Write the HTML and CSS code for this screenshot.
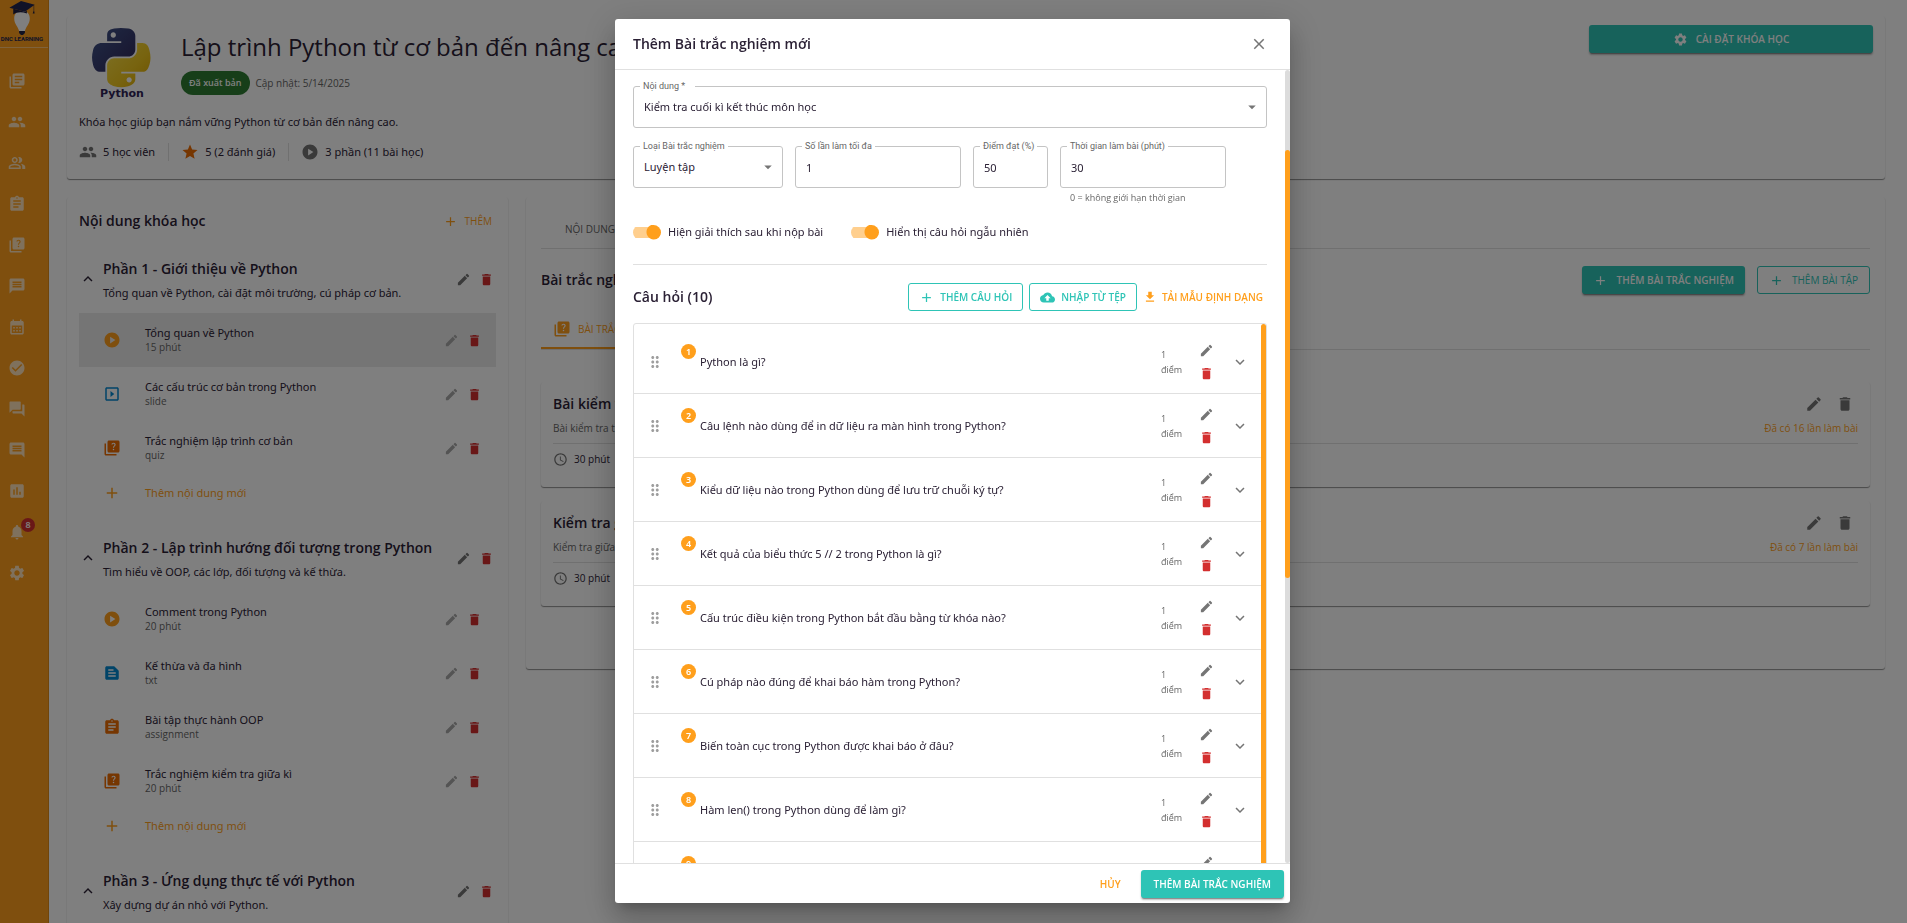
FILE: index.html
```html
<!DOCTYPE html>
<html lang="vi">
<head>
<meta charset="utf-8">
<title>DNC Learning</title>
<link rel="stylesheet" href="styles.css">
</head>
<body>
<svg class="sprite" aria-hidden="true">
<symbol id="books" viewBox="0 0 24 24"><path d="M4 6H2v14c0 1.1.9 2 2 2h14v-2H4zm16-4H8c-1.1 0-2 .9-2 2v12c0 1.1.9 2 2 2h12c1.1 0 2-.9 2-2V4c0-1.1-.9-2-2-2m-1 9H9V9h10zm-4 4H9v-2h6zm4-8H9V5h10z"/></symbol>
<symbol id="people" viewBox="0 0 24 24"><path d="M16 11c1.66 0 2.99-1.34 2.99-3S17.66 5 16 5s-3 1.34-3 3 1.34 3 3 3m-8 0c1.66 0 2.99-1.34 2.99-3S9.66 5 8 5 5 6.34 5 8s1.34 3 3 3m0 2c-2.33 0-7 1.17-7 3.5V19h14v-2.5c0-2.33-4.67-3.5-7-3.5m8 0c-.29 0-.62.02-.97.05 1.16.84 1.97 1.97 1.97 3.45V19h6v-2.5c0-2.33-4.67-3.5-7-3.5"/></symbol>
<symbol id="group" viewBox="0 0 24 24"><path d="M16.67 13.13C18.04 14.06 19 15.32 19 17v3h4v-3c0-2.18-3.57-3.47-6.33-3.87M15 12c2.21 0 4-1.79 4-4s-1.79-4-4-4c-.47 0-.91.1-1.33.24C14.5 5.27 15 6.58 15 8s-.5 2.73-1.33 3.76c.42.14.86.24 1.33.24m-6 0c2.21 0 4-1.79 4-4s-1.79-4-4-4-4 1.79-4 4 1.79 4 4 4m0-6c1.1 0 2 .9 2 2s-.9 2-2 2-2-.9-2-2 .9-2 2-2m0 7c-2.67 0-8 1.34-8 4v3h16v-3c0-2.66-5.33-4-8-4m6 5H3v-.99C3.2 16.29 6.3 15 9 15s5.8 1.29 6 2z"/></symbol>
<symbol id="assignment" viewBox="0 0 24 24"><path d="M19 3h-4.18C14.4 1.84 13.3 1 12 1s-2.4.84-2.82 2H5c-1.1 0-2 .9-2 2v14c0 1.1.9 2 2 2h14c1.1 0 2-.9 2-2V5c0-1.1-.9-2-2-2m-7 0c.55 0 1 .45 1 1s-.45 1-1 1-1-.45-1-1 .45-1 1-1m2 14H7v-2h7zm3-4H7v-2h10zm0-4H7V7h10z"/></symbol>
<symbol id="quiz" viewBox="0 0 24 24"><path d="M4 6H2v14c0 1.1.9 2 2 2h14v-2H4zm16-4H8c-1.1 0-2 .9-2 2v12c0 1.1.9 2 2 2h12c1.1 0 2-.9 2-2V4c0-1.1-.9-2-2-2m-5.99 13c-.59 0-1.05-.47-1.05-1.05 0-.59.47-1.04 1.05-1.04.59 0 1.04.45 1.04 1.04-.01.58-.45 1.05-1.04 1.05m2.5-6.17c-.63.93-1.23 1.21-1.56 1.81-.13.24-.18.4-.18 1.18h-1.52c0-.41-.06-1.08.26-1.65.41-.73 1.18-1.16 1.63-1.8.48-.68.21-1.94-1.14-1.94-.88 0-1.32.67-1.5 1.23l-1.37-.57C11.51 5.96 12.52 5 13.99 5c1.23 0 2.08.56 2.51 1.26.37.61.58 1.73.01 2.57"/></symbol>
<symbol id="message" viewBox="0 0 24 24"><path d="M20 2H4c-1.1 0-1.99.9-1.99 2L2 22l4-4h14c1.1 0 2-.9 2-2V4c0-1.1-.9-2-2-2m-2 12H6v-2h12zm0-3H6V9h12zm0-3H6V6h12z"/></symbol>
<symbol id="calendar" viewBox="0 0 24 24"><path d="M19 4h-1V2h-2v2H8V2H6v2H5c-1.11 0-1.99.9-1.99 2L3 20c0 1.1.89 2 2 2h14c1.1 0 2-.9 2-2V6c0-1.1-.9-2-2-2m0 16H5V10h14zM9 14H7v-2h2zm4 0h-2v-2h2zm4 0h-2v-2h2zm-8 4H7v-2h2zm4 0h-2v-2h2zm4 0h-2v-2h2z"/></symbol>
<symbol id="check" viewBox="0 0 24 24"><path d="M12 2C6.48 2 2 6.48 2 12s4.48 10 10 10 10-4.48 10-10S17.52 2 12 2m-2 15-5-5 1.41-1.41L10 14.17l7.59-7.59L19 8z"/></symbol>
<symbol id="forum" viewBox="0 0 24 24"><path d="M21 6h-2v9H6v2c0 .55.45 1 1 1h11l4 4V7c0-.55-.45-1-1-1m-4 6V3c0-.55-.45-1-1-1H3c-.55 0-1 .45-1 1v14l4-4h10c.55 0 1-.45 1-1"/></symbol>
<symbol id="comment" viewBox="0 0 24 24"><path d="M21.99 4c0-1.1-.89-2-1.99-2H4c-1.1 0-2 .9-2 2v12c0 1.1.9 2 2 2h14l4 4zM18 14H6v-2h12zm0-3H6V9h12zm0-3H6V6h12z"/></symbol>
<symbol id="chart" viewBox="0 0 24 24"><path d="M19 3H5c-1.1 0-2 .9-2 2v14c0 1.1.9 2 2 2h14c1.1 0 2-.9 2-2V5c0-1.1-.9-2-2-2M9 17H7v-7h2zm4 0h-2V7h2zm4 0h-2v-4h2z"/></symbol>
<symbol id="bell" viewBox="0 0 24 24"><path d="M12 22c1.1 0 2-.9 2-2h-4c0 1.1.89 2 2 2m6-6v-5c0-3.07-1.64-5.64-4.5-6.32V4c0-.83-.67-1.5-1.5-1.5s-1.5.67-1.5 1.5v.68C7.63 5.36 6 7.92 6 11v5l-2 2v1h16v-1z"/></symbol>
<symbol id="gear" viewBox="0 0 24 24"><path d="M19.14 12.94c.04-.3.06-.61.06-.94 0-.32-.02-.64-.07-.94l2.03-1.58c.18-.14.23-.41.12-.61l-1.92-3.32c-.12-.22-.37-.29-.59-.22l-2.39.96c-.5-.38-1.03-.7-1.62-.94l-.36-2.54c-.04-.24-.24-.41-.48-.41h-3.84c-.24 0-.43.17-.47.41l-.36 2.54c-.59.24-1.13.57-1.62.94l-2.39-.96c-.22-.08-.47 0-.59.22L2.74 8.87c-.12.21-.08.47.12.61l2.03 1.58c-.05.3-.09.63-.09.94s.02.64.07.94l-2.03 1.58c-.18.14-.23.41-.12.61l1.92 3.32c.12.22.37.29.59.22l2.39-.96c.5.38 1.03.7 1.62.94l.36 2.54c.05.24.24.41.48.41h3.84c.24 0 .44-.17.47-.41l.36-2.54c.59-.24 1.13-.56 1.62-.94l2.39.96c.22.08.47 0 .59-.22l1.92-3.32c.12-.22.07-.47-.12-.61zM12 15.6c-1.98 0-3.6-1.62-3.6-3.6s1.62-3.6 3.6-3.6 3.6 1.62 3.6 3.6-1.62 3.6-3.6 3.6"/></symbol>
<symbol id="star" viewBox="0 0 24 24"><path d="M12 17.27 18.18 21l-1.64-7.03L22 9.24l-7.19-.61L12 2 9.19 8.63 2 9.24l5.46 4.73L5.82 21z"/></symbol>
<symbol id="play" viewBox="0 0 24 24"><path d="M12 2C6.48 2 2 6.48 2 12s4.48 10 10 10 10-4.48 10-10S17.52 2 12 2M9.5 16.5v-9l7 4.5z"/></symbol>
<symbol id="slideshow" viewBox="0 0 24 24"><path d="M10 8v8l5-4zm9-5H5c-1.1 0-2 .9-2 2v14c0 1.1.9 2 2 2h14c1.1 0 2-.9 2-2V5c0-1.1-.9-2-2-2m0 16H5V5h14z"/></symbol>
<symbol id="snippet" viewBox="0 0 24 24"><path d="m20.41 8.41-4.83-4.83c-.37-.37-.88-.58-1.41-.58H5c-1.1 0-2 .9-2 2v14c0 1.1.9 2 2 2h14c1.1 0 2-.9 2-2V9.83c0-.53-.21-1.04-.59-1.42M7 7h7v2H7zm10 10H7v-2h10zm0-4H7v-2h10z"/></symbol>
<symbol id="edit" viewBox="0 0 24 24"><path d="M3 17.25V21h3.75L17.81 9.94l-3.75-3.75zM20.71 7.04c.39-.39.39-1.02 0-1.41l-2.34-2.34a.996.996 0 0 0-1.41 0l-1.83 1.83 3.75 3.75z"/></symbol>
<symbol id="trash" viewBox="0 0 24 24"><path d="M6 19c0 1.1.9 2 2 2h8c1.1 0 2-.9 2-2V7H6zM19 4h-3.5l-1-1h-5l-1 1H5v2h14z"/></symbol>
<symbol id="add" viewBox="0 0 24 24"><path d="M19 13h-6v6h-2v-6H5v-2h6V5h2v6h6z"/></symbol>
<symbol id="close" viewBox="0 0 24 24"><path d="M19 6.41 17.59 5 12 10.59 6.41 5 5 6.41 10.59 12 5 17.59 6.41 19 12 13.41 17.59 19 19 17.59 13.41 12z"/></symbol>
<symbol id="down" viewBox="0 0 24 24"><path d="M16.59 8.59 12 13.17 7.41 8.59 6 10l6 6 6-6z"/></symbol>
<symbol id="up" viewBox="0 0 24 24"><path d="m12 8-6 6 1.41 1.41L12 10.83l4.59 4.58L18 14z"/></symbol>
<symbol id="clock" viewBox="0 0 24 24"><path d="M11.99 2C6.47 2 2 6.48 2 12s4.47 10 9.99 10C17.52 22 22 17.52 22 12S17.52 2 11.99 2M12 20c-4.42 0-8-3.58-8-8s3.58-8 8-8 8 3.58 8 8-3.58 8-8 8m.5-13H11v6l5.25 3.15.75-1.23-4.5-2.67z"/></symbol>
<symbol id="caret" viewBox="0 0 24 24"><path d="m7 10 5 5 5-5z"/></symbol>
<symbol id="upload" viewBox="0 0 24 24"><path d="M19.35 10.04C18.67 6.59 15.64 4 12 4 9.11 4 6.6 5.64 5.35 8.04 2.34 8.36 0 10.91 0 14c0 3.31 2.69 6 6 6h13c2.76 0 5-2.24 5-5 0-2.64-2.05-4.78-4.65-4.96M14 13v4h-4v-4H7l5-5 5 5z"/></symbol>
<symbol id="download" viewBox="0 0 24 24"><path d="M19 9h-4V3H9v6H5l7 7zM5 18v2h14v-2z"/></symbol>
<symbol id="drag" viewBox="0 0 24 24"><path d="M11 18c0 1.1-.9 2-2 2s-2-.9-2-2 .9-2 2-2 2 .9 2 2m-2-8c-1.1 0-2 .9-2 2s.9 2 2 2 2-.9 2-2-.9-2-2-2m0-6c-1.1 0-2 .9-2 2s.9 2 2 2 2-.9 2-2-.9-2-2-2m6 4c1.1 0 2-.9 2-2s-.9-2-2-2-2 .9-2 2 .9 2 2 2m0 2c-1.1 0-2 .9-2 2s.9 2 2 2 2-.9 2-2-.9-2-2-2m0 6c-1.1 0-2 .9-2 2s.9 2 2 2 2-.9 2-2-.9-2-2-2"/></symbol>
</svg>

<div class="app">
<nav class="sidebar">
  <div class="brand">
    <svg class="brand-mark" viewBox="0 0 30 36" aria-hidden="true">
      <path d="M7 19c0-5 3-8 8-8s8 3 8 8c0 6-4 8-5 13h-6c-1-5-5-7-5-13" fill="#fff"/>
      <path d="M12 32h6v2l-2 2h-2l-2-2z" fill="#222244"/>
      <path d="M2 8 14 1l14 4-10 7z" fill="#23244f"/>
      <path d="M6 9v6c4-3 9-3 14-1v-3l-2 1z" fill="#1b1c40"/>
      <path d="M27 5v6l-1 3h2l-.5-3V5z" fill="#1b1c40"/>
    </svg>
    <span class="brand-name">DNC LEARNING</span>
  </div>
  <div class="menu">
    <a class="menu-item" href="#" aria-label="Khóa học"><svg class="icon"><use href="#books"/></svg></a>
    <a class="menu-item" href="#" aria-label="Học viên"><svg class="icon"><use href="#people"/></svg></a>
    <a class="menu-item" href="#" aria-label="Nhóm"><svg class="icon"><use href="#group"/></svg></a>
    <a class="menu-item" href="#" aria-label="Bài tập"><svg class="icon"><use href="#assignment"/></svg></a>
    <a class="menu-item" href="#" aria-label="Trắc nghiệm"><svg class="icon"><use href="#quiz"/></svg></a>
    <a class="menu-item" href="#" aria-label="Tin nhắn"><svg class="icon"><use href="#message"/></svg></a>
    <a class="menu-item" href="#" aria-label="Lịch"><svg class="icon"><use href="#calendar"/></svg></a>
    <a class="menu-item" href="#" aria-label="Điểm danh"><svg class="icon"><use href="#check"/></svg></a>
    <a class="menu-item" href="#" aria-label="Thảo luận"><svg class="icon"><use href="#forum"/></svg></a>
    <a class="menu-item" href="#" aria-label="Bình luận"><svg class="icon"><use href="#comment"/></svg></a>
    <a class="menu-item" href="#" aria-label="Thống kê"><svg class="icon"><use href="#chart"/></svg></a>
    <a class="menu-item" href="#" aria-label="Thông báo"><svg class="icon"><use href="#bell"/></svg><span class="menu-badge">8</span></a>
    <a class="menu-item" href="#" aria-label="Cài đặt"><svg class="icon"><use href="#gear"/></svg></a>
  </div>
</nav>

<main class="main">
  <header class="card course">
    <div class="course-top">
      <svg class="course-logo" viewBox="0 0 84 84" aria-hidden="true">
        <defs>
          <linearGradient id="pyb" x1="0" y1="0" x2="1" y2="1"><stop offset="0" stop-color="#40578c"/><stop offset="1" stop-color="#2f2457"/></linearGradient>
          <linearGradient id="pyy" x1="0" y1="0" x2="1" y2="1"><stop offset="0" stop-color="#fbe24a"/><stop offset=".6" stop-color="#efc61d"/><stop offset="1" stop-color="#d9a400"/></linearGradient>
        </defs>
        <g transform="translate(13 3) scale(.527)">
          <path fill="url(#pyb)" d="M54.9 0C50.300 0 46 .4 42.100 1.100 30.800 3.100 28.700 7.300 28.700 15v10.200h26.800v3.400H18.700c-7.800 0-14.600 4.700-16.700 13.600-2.500 10.200-2.600 16.600 0 27.300 1.900 7.900 6.500 13.600 14.200 13.600h9.200V70.800c0-8.800 7.700-16.600 16.700-16.600h26.700c7.400 0 13.400-6.100 13.400-13.600V15c0-7.300-6.100-12.700-13.400-13.900C64.300.3 59.500 0 54.900 0M40.400 8.200c2.800 0 5 2.300 5 5.100s-2.200 5.100-5 5.100-5-2.300-5-5.100 2.200-5.100 5-5.100"/>
          <path fill="url(#pyy)" d="M85.600 28.700v11.900c0 9.200-7.800 17-16.700 17H42.100c-7.300 0-13.400 6.300-13.400 13.600v25.500c0 7.300 6.300 11.500 13.400 13.600 8.500 2.500 16.600 2.900 26.700 0 6.700-1.900 13.400-5.900 13.400-13.600V86.500H55.500v-3.400h40.100c7.800 0 10.700-5.400 13.400-13.600 2.800-8.400 2.700-16.500 0-27.300-1.900-7.700-5.600-13.600-13.400-13.600zM70.500 93.300c2.800 0 5 2.300 5 5.100s-2.200 5.100-5 5.100-5-2.300-5-5.100 2.200-5.100 5-5.100"/>
        </g>
        <text class="logo-word" x="43" y="72" text-anchor="middle">Python</text>
      </svg>
      <div class="course-heading">
        <h1 class="course-title">Lập trình Python từ cơ bản đến nâng cao</h1>
        <div class="course-meta"><span class="chip">Đã xuất bản</span><span class="muted">Cập nhật: 5/14/2025</span></div>
      </div>
      <button class="btn solid settings"><svg class="icon small"><use href="#gear"/></svg>CÀI ĐẶT KHÓA HỌC</button>
    </div>
    <p class="course-text">Khóa học giúp bạn nắm vững Python từ cơ bản đến nâng cao.</p>
    <div class="stats">
      <span class="stat"><svg class="icon gray"><use href="#people"/></svg>5 học viên</span>
      <span class="stat"><svg class="icon dark-orange"><use href="#star"/></svg>5 (2 đánh giá)</span>
      <span class="stat"><svg class="icon gray"><use href="#play"/></svg>3 phần (11 bài học)</span>
    </div>
  </header>

  <div class="columns">
    <section class="card outline">
      <div class="outline-head"><h2 class="heading">Nội dung khóa học</h2><button class="text-btn"><svg class="icon small"><use href="#add"/></svg>THÊM</button></div>

      <div class="part">
        <svg class="icon"><use href="#up"/></svg>
        <div class="part-text"><h3 class="heading">Phần 1 - Giới thiệu về Python</h3><p class="part-sub">Tổng quan về Python, cài đặt môi trường, cú pháp cơ bản.</p></div>
        <button class="tool" aria-label="Sửa"><svg class="icon small"><use href="#edit"/></svg></button><button class="tool red" aria-label="Xóa"><svg class="icon small"><use href="#trash"/></svg></button>
      </div>
      <div class="item selected"><svg class="icon orange"><use href="#play"/></svg><div class="item-text"><span>Tổng quan về Python</span><small>15 phút</small></div><button class="tool light" aria-label="Sửa"><svg class="icon small"><use href="#edit"/></svg></button><button class="tool red" aria-label="Xóa"><svg class="icon small"><use href="#trash"/></svg></button></div>
      <div class="item"><svg class="icon blue"><use href="#slideshow"/></svg><div class="item-text"><span>Các cấu trúc cơ bản trong Python</span><small>slide</small></div><button class="tool light" aria-label="Sửa"><svg class="icon small"><use href="#edit"/></svg></button><button class="tool red" aria-label="Xóa"><svg class="icon small"><use href="#trash"/></svg></button></div>
      <div class="item"><svg class="icon dark-orange"><use href="#quiz"/></svg><div class="item-text"><span>Trắc nghiệm lập trình cơ bản</span><small>quiz</small></div><button class="tool light" aria-label="Sửa"><svg class="icon small"><use href="#edit"/></svg></button><button class="tool red" aria-label="Xóa"><svg class="icon small"><use href="#trash"/></svg></button></div>
      <button class="add-item"><svg class="icon"><use href="#add"/></svg>Thêm nội dung mới</button>

      <div class="part">
        <svg class="icon"><use href="#up"/></svg>
        <div class="part-text"><h3 class="heading">Phần 2 - Lập trình hướng đối tượng trong Python</h3><p class="part-sub">Tìm hiểu về OOP, các lớp, đối tượng và kế thừa.</p></div>
        <button class="tool" aria-label="Sửa"><svg class="icon small"><use href="#edit"/></svg></button><button class="tool red" aria-label="Xóa"><svg class="icon small"><use href="#trash"/></svg></button>
      </div>
      <div class="item"><svg class="icon orange"><use href="#play"/></svg><div class="item-text"><span>Comment trong Python</span><small>20 phút</small></div><button class="tool light" aria-label="Sửa"><svg class="icon small"><use href="#edit"/></svg></button><button class="tool red" aria-label="Xóa"><svg class="icon small"><use href="#trash"/></svg></button></div>
      <div class="item"><svg class="icon blue"><use href="#snippet"/></svg><div class="item-text"><span>Kế thừa và đa hình</span><small>txt</small></div><button class="tool light" aria-label="Sửa"><svg class="icon small"><use href="#edit"/></svg></button><button class="tool red" aria-label="Xóa"><svg class="icon small"><use href="#trash"/></svg></button></div>
      <div class="item"><svg class="icon dark-orange"><use href="#assignment"/></svg><div class="item-text"><span>Bài tập thực hành OOP</span><small>assignment</small></div><button class="tool light" aria-label="Sửa"><svg class="icon small"><use href="#edit"/></svg></button><button class="tool red" aria-label="Xóa"><svg class="icon small"><use href="#trash"/></svg></button></div>
      <div class="item"><svg class="icon dark-orange"><use href="#quiz"/></svg><div class="item-text"><span>Trắc nghiệm kiểm tra giữa kì</span><small>20 phút</small></div><button class="tool light" aria-label="Sửa"><svg class="icon small"><use href="#edit"/></svg></button><button class="tool red" aria-label="Xóa"><svg class="icon small"><use href="#trash"/></svg></button></div>
      <button class="add-item"><svg class="icon"><use href="#add"/></svg>Thêm nội dung mới</button>

      <div class="part">
        <svg class="icon"><use href="#up"/></svg>
        <div class="part-text"><h3 class="heading">Phần 3 - Ứng dụng thực tế với Python</h3><p class="part-sub">Xây dựng dự án nhỏ với Python.</p></div>
        <button class="tool" aria-label="Sửa"><svg class="icon small"><use href="#edit"/></svg></button><button class="tool red" aria-label="Xóa"><svg class="icon small"><use href="#trash"/></svg></button>
      </div>
    </section>

    <section class="card detail">
      <div class="tabs"><button class="tab">NỘI DUNG</button></div>
      <div class="detail-head">
        <h2 class="heading">Bài trắc nghiệm</h2>
        <div class="detail-actions">
          <button class="btn solid"><svg class="icon small"><use href="#add"/></svg>THÊM BÀI TRẮC NGHIỆM</button>
          <button class="btn line plain"><svg class="icon small"><use href="#add"/></svg>THÊM BÀI TẬP</button>
        </div>
      </div>
      <div class="tabs sub"><button class="tab active"><svg class="icon"><use href="#quiz"/></svg>BÀI TRẮC NGHIỆM</button></div>
      <article class="card quiz">
        <div class="quiz-head"><h3 class="heading">Bài kiểm tra</h3><button class="tool big" aria-label="Sửa"><svg class="icon"><use href="#edit"/></svg></button><button class="tool big" aria-label="Xóa"><svg class="icon"><use href="#trash"/></svg></button></div>
        <div class="quiz-info"><span>Bài kiểm tra trắc nghiệm</span><span class="attempts">Đã có 16 lần làm bài</span></div>
        <div class="quiz-time"><svg class="icon small"><use href="#clock"/></svg>30 phút</div>
      </article>
      <article class="card quiz">
        <div class="quiz-head"><h3 class="heading">Kiểm tra giữa kì</h3><button class="tool big" aria-label="Sửa"><svg class="icon"><use href="#edit"/></svg></button><button class="tool big" aria-label="Xóa"><svg class="icon"><use href="#trash"/></svg></button></div>
        <div class="quiz-info"><span>Kiểm tra giữa kì</span><span class="attempts">Đã có 7 lần làm bài</span></div>
        <div class="quiz-time"><svg class="icon small"><use href="#clock"/></svg>30 phút</div>
      </article>
    </section>
  </div>
</main>
</div>

<div class="backdrop">
<div class="dialog" role="dialog" aria-labelledby="dialog-title">
  <div class="dialog-head"><h2 class="heading" id="dialog-title">Thêm Bài trắc nghiệm mới</h2><button class="tool big" aria-label="Đóng"><svg class="icon"><use href="#close"/></svg></button></div>
  <div class="dialog-body">
    <div class="field"><label class="field-label wide" for="content">Nội dung *</label><select class="control" id="content"><option>Kiểm tra cuối kì kết thúc môn học</option></select><svg class="icon field-caret"><use href="#caret"/></svg></div>
    <div class="field-row">
      <div class="field"><label class="field-label" for="kind">Loại Bài trắc nghiệm</label><select class="control" id="kind"><option>Luyện tập</option></select><svg class="icon field-caret"><use href="#caret"/></svg></div>
      <div class="field"><label class="field-label" for="tries">Số lần làm tối đa</label><input class="control" id="tries" value="1"></div>
      <div class="field"><label class="field-label" for="pass">Điểm đạt (%)</label><input class="control" id="pass" value="50"></div>
      <div class="field"><label class="field-label" for="time">Thời gian làm bài (phút)</label><input class="control" id="time" value="30"><span class="helper">0 = không giới hạn thời gian</span></div>
    </div>
    <div class="switches">
      <label class="switch"><input type="checkbox" class="toggle" checked>Hiện giải thích sau khi nộp bài</label>
      <label class="switch"><input type="checkbox" class="toggle" checked>Hiển thị câu hỏi ngẫu nhiên</label>
    </div>
    <div class="questions-head">
      <h3 class="heading">Câu hỏi (10)</h3>
      <div class="questions-actions">
        <button class="btn line tight"><svg class="icon small"><use href="#add"/></svg>THÊM CÂU HỎI</button>
        <button class="btn line tight"><svg class="icon small"><use href="#upload"/></svg>NHẬP TỪ TỆP</button>
        <button class="text-btn strong"><svg class="icon tiny"><use href="#download"/></svg>TẢI MẪU ĐỊNH DẠNG</button>
      </div>
    </div>
    <div class="questions">
      <div class="question"><svg class="icon grip"><use href="#drag"/></svg><span class="number">1</span><span class="question-text">Python là gì?</span><span class="points">1 điểm</span><span class="question-tools"><button class="tool" aria-label="Sửa"><svg class="icon small"><use href="#edit"/></svg></button><button class="tool red" aria-label="Xóa"><svg class="icon small"><use href="#trash"/></svg></button></span><button class="tool big" aria-label="Mở rộng"><svg class="icon"><use href="#down"/></svg></button></div>
      <div class="question"><svg class="icon grip"><use href="#drag"/></svg><span class="number">2</span><span class="question-text">Câu lệnh nào dùng để in dữ liệu ra màn hình trong Python?</span><span class="points">1 điểm</span><span class="question-tools"><button class="tool" aria-label="Sửa"><svg class="icon small"><use href="#edit"/></svg></button><button class="tool red" aria-label="Xóa"><svg class="icon small"><use href="#trash"/></svg></button></span><button class="tool big" aria-label="Mở rộng"><svg class="icon"><use href="#down"/></svg></button></div>
      <div class="question"><svg class="icon grip"><use href="#drag"/></svg><span class="number">3</span><span class="question-text">Kiểu dữ liệu nào trong Python dùng để lưu trữ chuỗi ký tự?</span><span class="points">1 điểm</span><span class="question-tools"><button class="tool" aria-label="Sửa"><svg class="icon small"><use href="#edit"/></svg></button><button class="tool red" aria-label="Xóa"><svg class="icon small"><use href="#trash"/></svg></button></span><button class="tool big" aria-label="Mở rộng"><svg class="icon"><use href="#down"/></svg></button></div>
      <div class="question"><svg class="icon grip"><use href="#drag"/></svg><span class="number">4</span><span class="question-text">Kết quả của biểu thức 5 // 2 trong Python là gì?</span><span class="points">1 điểm</span><span class="question-tools"><button class="tool" aria-label="Sửa"><svg class="icon small"><use href="#edit"/></svg></button><button class="tool red" aria-label="Xóa"><svg class="icon small"><use href="#trash"/></svg></button></span><button class="tool big" aria-label="Mở rộng"><svg class="icon"><use href="#down"/></svg></button></div>
      <div class="question"><svg class="icon grip"><use href="#drag"/></svg><span class="number">5</span><span class="question-text">Cấu trúc điều kiện trong Python bắt đầu bằng từ khóa nào?</span><span class="points">1 điểm</span><span class="question-tools"><button class="tool" aria-label="Sửa"><svg class="icon small"><use href="#edit"/></svg></button><button class="tool red" aria-label="Xóa"><svg class="icon small"><use href="#trash"/></svg></button></span><button class="tool big" aria-label="Mở rộng"><svg class="icon"><use href="#down"/></svg></button></div>
      <div class="question"><svg class="icon grip"><use href="#drag"/></svg><span class="number">6</span><span class="question-text">Cú pháp nào đúng để khai báo hàm trong Python?</span><span class="points">1 điểm</span><span class="question-tools"><button class="tool" aria-label="Sửa"><svg class="icon small"><use href="#edit"/></svg></button><button class="tool red" aria-label="Xóa"><svg class="icon small"><use href="#trash"/></svg></button></span><button class="tool big" aria-label="Mở rộng"><svg class="icon"><use href="#down"/></svg></button></div>
      <div class="question"><svg class="icon grip"><use href="#drag"/></svg><span class="number">7</span><span class="question-text">Biến toàn cục trong Python được khai báo ở đâu?</span><span class="points">1 điểm</span><span class="question-tools"><button class="tool" aria-label="Sửa"><svg class="icon small"><use href="#edit"/></svg></button><button class="tool red" aria-label="Xóa"><svg class="icon small"><use href="#trash"/></svg></button></span><button class="tool big" aria-label="Mở rộng"><svg class="icon"><use href="#down"/></svg></button></div>
      <div class="question"><svg class="icon grip"><use href="#drag"/></svg><span class="number">8</span><span class="question-text">Hàm len() trong Python dùng để làm gì?</span><span class="points">1 điểm</span><span class="question-tools"><button class="tool" aria-label="Sửa"><svg class="icon small"><use href="#edit"/></svg></button><button class="tool red" aria-label="Xóa"><svg class="icon small"><use href="#trash"/></svg></button></span><button class="tool big" aria-label="Mở rộng"><svg class="icon"><use href="#down"/></svg></button></div>
      <div class="question"><svg class="icon grip"><use href="#drag"/></svg><span class="number">9</span><span class="question-text"></span><span class="points">1 điểm</span><span class="question-tools"><button class="tool" aria-label="Sửa"><svg class="icon small"><use href="#edit"/></svg></button><button class="tool red" aria-label="Xóa"><svg class="icon small"><use href="#trash"/></svg></button></span><button class="tool big" aria-label="Mở rộng"><svg class="icon"><use href="#down"/></svg></button></div>
      <div class="list-thumb"></div>
    </div>
    <div class="scroll-track"><div class="scroll-thumb"></div></div>
  </div>
  <div class="dialog-foot"><button class="text-btn cancel">HỦY</button><button class="btn solid submit">THÊM BÀI TRẮC NGHIỆM</button></div>
</div>
</div>
</body>
</html>
```
FILE: styles.css
```css
:root {
  --orange: #ff9f1c;
  --teal: #2ec4b6;
  --ink: #2b2135;
  --gray: #757575;
  --rule: #e0e0e0;
  --red: #d32f2f;
}

* { box-sizing: border-box; }

html, body { height: 100%; }

body {
  margin: 0;
  overflow: hidden;
  background: #fff;
  color: var(--ink);
  font: 11px/16px "Noto Sans", "Open Sans", sans-serif;
}

h1, h2, h3, p { margin: 0; }

button {
  border: 0;
  padding: 0;
  background: none;
  color: inherit;
  font: inherit;
  white-space: nowrap;
}

.sprite { position: absolute; width: 0; height: 0; }

.icon { width: 18px; height: 18px; fill: currentColor; flex: none; display: block; }
.icon.small { width: 15px; height: 15px; }
.icon.tiny { width: 14px; height: 14px; }
.gray { color: var(--gray); }
.orange { color: var(--orange); }
.dark-orange { color: #ed6c02; }
.blue { color: #0288d1; }

.heading, .course-title, .course-meta, .btn, .text-btn, .tab, .item-text small, .quiz-info, .quiz-time, .helper, .points { font-family: "Open Sans", "Noto Sans", sans-serif; }
.heading { font-size: 14px; line-height: 24px; font-weight: 600; }
.muted { color: #666; }

.app { display: flex; height: 100%; overflow: hidden; }

/* Sidebar */
.sidebar { width: 49px; flex: none; background: var(--orange); color: rgba(255, 255, 255, .7); border-right: 1px solid #e08a14; }
.brand { height: 48px; border-bottom: 1px solid rgba(255, 255, 255, .4); display: flex; flex-direction: column; align-items: center; padding-right: 4px; }
.brand-mark { width: 30px; height: 35px; }
.brand-name { font: 700 6px/8px Roboto, sans-serif; color: #23244f; white-space: nowrap; }
.menu { padding-top: 12px; }
.menu-item { position: relative; display: flex; align-items: center; height: 41px; padding-left: 8px; color: inherit; }
.menu-badge { position: absolute; left: 21px; top: 7px; width: 14px; height: 14px; border-radius: 7px; background: var(--red); color: #fff; font-size: 9px; line-height: 14px; font-weight: 600; text-align: center; }

/* Page */
.main { flex: 1; min-width: 0; padding: 16px 22px 0 18px; display: flex; flex-direction: column; gap: 18px; }
.card { background: #fff; border-radius: 3px; box-shadow: 0 1px 1px rgba(0, 0, 0, .4), 0 1px 2px rgba(0, 0, 0, .06); }

.course { padding: 9px 12px 18px; flex: none; }
.course-top { display: flex; align-items: flex-start; gap: 18px; height: 84px; }
.course-logo { width: 84px; height: 84px; flex: none; }
.logo-word { font: 700 11px "DejaVu Sans", sans-serif; fill: #2f2457; }
.course-heading { flex: 1; min-width: 0; }
.course-title { font-size: 24px; line-height: 32px; font-weight: 400; padding-top: 6px; white-space: nowrap; }
.course-meta { display: flex; align-items: center; gap: 6px; padding-top: 8px; font-size: 10px; }
.chip { height: 24px; padding: 0 8px; border-radius: 12px; background: #2e7d32; color: #fff; font-size: 9px; line-height: 24px; font-weight: 600; }
.course-text { padding-top: 4px; line-height: 18px; }
.stats { display: flex; align-items: center; padding-top: 12px; }
.stat { display: flex; align-items: center; gap: 6px; height: 18px; padding-right: 13px; margin-right: 12px; border-right: 1px solid var(--rule); }
.stat:last-child { border-right: 0; }

.btn { display: inline-flex; align-items: center; justify-content: center; gap: 8px; height: 28px; padding: 0 11px; border-radius: 3px; font-size: 10px; font-weight: 600; }
.solid { background: var(--teal); color: #fff; box-shadow: 0 2px 1px -1px rgba(0, 0, 0, .3), 0 2px 2px rgba(0, 0, 0, .24); }
.line { border: 1px solid var(--teal); color: var(--teal); background: none; }
.tight { padding: 0 10px; gap: 6px; }
.plain { font-weight: 500; }
.settings { width: 284px; }
.submit { padding: 0 13px; }
.text-btn { display: inline-flex; align-items: center; gap: 7px; color: var(--orange); font-size: 10px; }
.text-btn.strong { gap: 5px; font-weight: 600; }
.text-btn.cancel { font-weight: 600; }

.tool { width: 23px; height: 23px; display: grid; place-items: center; color: var(--gray); flex: none; }
.tool.big { width: 31px; height: 30px; }
.tool.red { color: var(--red); }
.tool.light { color: #a8a8a8; }

.columns { flex: 1; min-height: 0; display: grid; grid-template-columns: 441px minmax(0, 1fr); gap: 18px; align-items: start; }
.outline { padding: 12px; height: 100vh; }
.outline-head { display: flex; align-items: center; justify-content: space-between; height: 24px; margin-bottom: 12px; padding-right: 4px; }
.part { display: flex; align-items: center; height: 68px; margin-right: -2px; }
.part-text { flex: 1; min-width: 0; padding-left: 6px; }
.part .heading { white-space: nowrap; }
.part-sub { line-height: 16px; padding-top: 4px; }
.item { display: flex; align-items: center; height: 54px; padding: 0 10px 0 24px; }
.item.selected { background: #ebebeb; }
.item-text { flex: 1; padding-left: 24px; display: flex; flex-direction: column; line-height: 15px; }
.item-text small { font-size: 10px; color: #666; }
.add-item { display: flex; align-items: center; gap: 24px; width: 100%; height: 36px; padding-left: 24px; margin-bottom: 13px; color: var(--orange); }

.detail { padding: 12px 15px 63px; }
.tabs { display: flex; border-bottom: 1px solid var(--rule); }
.tab { height: 39px; padding: 0 24px; font-size: 10px; color: #666; display: flex; align-items: center; gap: 7px; }
.tab.active { color: var(--orange); border-bottom: 2px solid var(--orange); padding: 0 12px; height: 38px; }
.detail-head { display: flex; justify-content: space-between; align-items: center; height: 62px; }
.detail-actions { display: flex; gap: 12px; }
.quiz { margin-top: 14px; height: 105px; padding: 7px 12px; }
.sub { margin-bottom: 32px; }
.quiz-head { display: flex; align-items: center; height: 30px; margin-right: -2px; }
.quiz-head .heading { flex: 1; }
.quiz-info { display: flex; justify-content: space-between; height: 25px; padding-top: 1px; font-size: 10px; color: #666; border-bottom: 1px solid var(--rule); }
.attempts { color: var(--orange); font-weight: 500; }
.quiz-time { display: flex; align-items: center; gap: 6px; height: 30px; font-size: 10px; }
.quiz-time .icon { color: var(--gray); }

/* Dialog */
.backdrop { position: fixed; inset: 0; padding: 19px 22px 20px 20px; background: rgba(0, 0, 0, .5); display: flex; justify-content: center; }
.dialog { width: 675px; max-width: 100%; height: 100%; display: flex; flex-direction: column; background: #fff; border-radius: 3px; overflow: hidden; box-shadow: 0 8px 11px -5px rgba(0, 0, 0, .2), 0 18px 28px 2px rgba(0, 0, 0, .14), 0 7px 34px 6px rgba(0, 0, 0, .12); }
.dialog-head { flex: none; display: flex; align-items: center; justify-content: space-between; height: 51px; padding: 0 16px 0 18px; border-bottom: 1px solid var(--rule); }
.dialog-body { position: relative; flex: 1; min-height: 0; overflow: hidden; padding: 16px 23px 0 18px; }
.dialog-foot { flex: none; display: flex; align-items: center; justify-content: flex-end; height: 40px; gap: 20px; padding: 0 6px; border-top: 1px solid var(--rule); }

.field { position: relative; }
.field-label { position: absolute; left: 7px; top: -6px; padding: 0 3px; background: #fff; color: #666; font: 9px/12px Roboto, sans-serif; white-space: nowrap; }
.field-label.wide { padding-right: 10px; }
.control { display: block; width: 100%; height: 42px; padding: 0 10px; border: 1px solid #c4c4c4; border-radius: 3px; background: #fff; color: var(--ink); font: inherit; appearance: none; outline: 0; }
.field-caret { position: absolute; right: 6px; top: 12px; color: var(--gray); pointer-events: none; }
.helper { display: block; padding: 2px 10px 0; font-size: 9px; line-height: 16px; color: #666; white-space: nowrap; }
.field-row { display: grid; grid-template-columns: 150px 166px 75px 166px; gap: 12px; padding-top: 18px; }
.switches { display: flex; gap: 28px; padding: 16px 0 22px; border-bottom: 1px solid var(--rule); }
.switch { display: flex; align-items: center; gap: 7px; height: 20px; }
.toggle { appearance: none; margin: 0; width: 28px; height: 15px; border-radius: 8px; background: radial-gradient(circle at 21px 7px, var(--orange) 7px, transparent 8px), linear-gradient(#ffcf8e, #ffcf8e) 0 2px / 22px 11px no-repeat; }
.questions-head { display: flex; align-items: center; justify-content: space-between; padding: 18px 4px 12px 0; }
.questions-actions { display: flex; align-items: center; gap: 6px; }
.questions { position: relative; border: 1px solid var(--rule); border-radius: 3px; padding: 6px 5px 0 0; }
.question { display: flex; align-items: center; height: 64px; padding: 0 6px 0 12px; border-bottom: 1px solid var(--rule); }
.grip { color: #9e9e9e; }
.number { align-self: flex-start; margin: 14px 4px 0 17px; width: 15px; height: 15px; border-radius: 8px; background: var(--orange); color: #fff; font-size: 9px; line-height: 15px; font-weight: 600; text-align: center; }
.question-text { flex: 1; }
.points { width: 22px; font-size: 9px; line-height: 15px; color: #666; }
.question-tools { display: flex; flex-direction: column; margin: 0 6px 0 12px; }
.list-thumb { position: absolute; right: 0; top: 0; width: 5px; height: 100%; border-radius: 3px; background: var(--orange); }
.scroll-track { position: absolute; right: 0; top: 0; width: 5px; height: 100%; border-radius: 3px; background: #dcdcdc; }
.scroll-thumb { width: 100%; height: 54%; margin-top: 80px; border-radius: 3px; background: var(--orange); }
```
